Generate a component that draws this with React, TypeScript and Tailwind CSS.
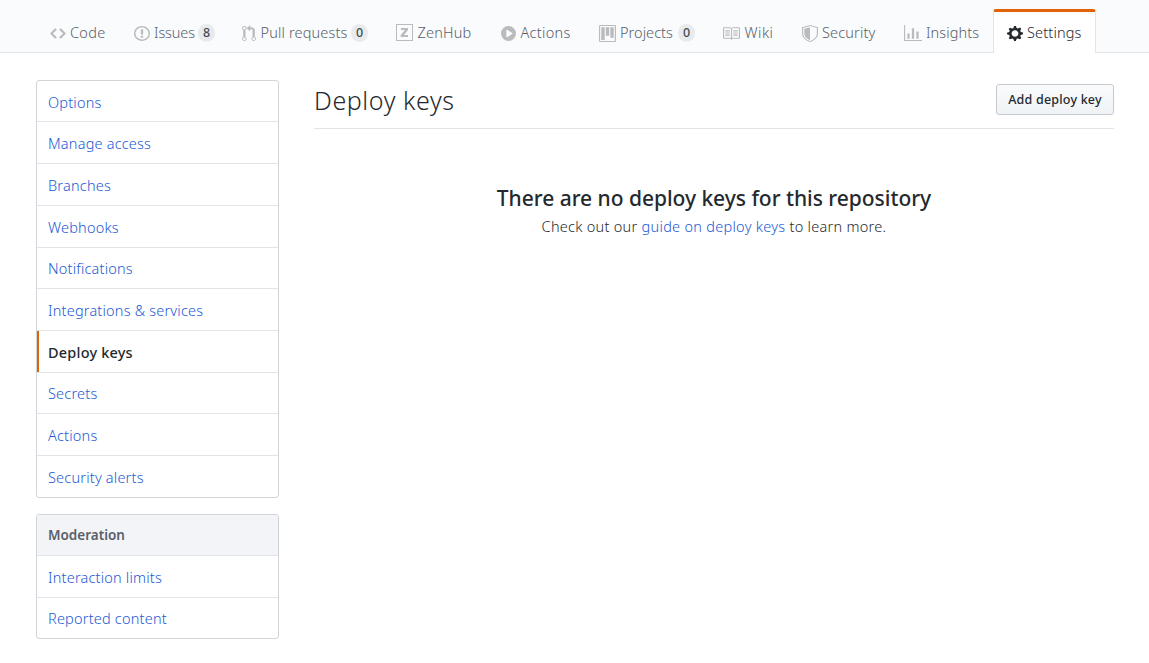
import type { ReactNode } from "react";

type Glyph = { viewBox: string; size: string; d: string };

const glyphs: Record<string, Glyph> = {
  code: {
    viewBox: "0 0 14 16",
    size: "w-4 h-[17px]",
    d: "M9.5 3L8 4.5 11.5 8 8 11.5 9.5 13 14 8 9.5 3zm-5 0L0 8l4.5 5L6 11.5 2.5 8 6 4.5 4.5 3z",
  },
  issue: {
    viewBox: "0 0 14 16",
    size: "w-4 h-[17px]",
    d: "M7 2.3c3.14 0 5.7 2.56 5.7 5.7s-2.56 5.7-5.7 5.7A5.71 5.71 0 011.3 8c0-3.14 2.56-5.7 5.7-5.7zM7 1C3.14 1 0 4.14 0 8s3.14 7 7 7 7-3.14 7-7-3.14-7-7-7zm1 3H6v5h2V4zm0 6H6v2h2v-2z",
  },
  pull: {
    viewBox: "0 0 12 16",
    size: "w-3.5 h-[17px]",
    d: "M11 11.28V5c-.03-.78-.34-1.47-.94-2.06C9.46 2.35 8.78 2.03 8 2H7V0L4 3l3 3V4h1c.27.02.48.11.69.31.21.2.3.42.31.69v6.28A1.993 1.993 0 0010 15a1.993 1.993 0 001-3.72zm-1 2.92c-.66 0-1.2-.55-1.2-1.2 0-.65.55-1.2 1.2-1.2.65 0 1.2.55 1.2 1.2 0 .65-.55 1.2-1.2 1.2zM4 3c0-1.11-.89-2-2-2a1.993 1.993 0 00-1 3.72v6.56A1.993 1.993 0 002 15a1.993 1.993 0 001-3.72V4.72c.59-.34 1-.98 1-1.72zm-.8 10c0 .66-.55 1.2-1.2 1.2-.65 0-1.2-.55-1.2-1.2 0-.65.55-1.2 1.2-1.2.65 0 1.2.55 1.2 1.2zM2 4.2C1.34 4.2.8 3.65.8 3c0-.65.55-1.2 1.2-1.2.65 0 1.2.55 1.2 1.2 0 .65-.55 1.2-1.2 1.2z",
  },
  zen: {
    viewBox: "0 0 17 17",
    size: "w-[17px] h-[17px] -mt-px",
    d: "M0 0h17v17H0zM1 1v15h15V1zM5 4h7v2L7.9 11H12v2H4.7v-2L8.900 6H5z",
  },
  play: {
    viewBox: "0 0 14 16",
    size: "w-[15px] h-[17px]",
    d: "M14 8A7 7 0 110 8a7 7 0 0114 0zm-8.223 3.482l4.599-3.066a.5.5 0 000-.832L5.777 4.518A.5.5 0 005 4.934v6.132a.5.5 0 00.777.416z",
  },
  project: {
    viewBox: "0 0 15 16",
    size: "w-[17px] h-[17px]",
    d: "M10 12h3V2h-3v10zm-4-2h3V2H6v8zm-4 4h3V2H2v12zm-1 1h13V1H1v14zM14 0H1a1 1 0 00-1 1v14a1 1 0 001 1h13a1 1 0 001-1V1a1 1 0 00-1-1z",
  },
  book: {
    viewBox: "1 0 15 16",
    size: "w-[17px] h-[17px]",
    d: "M3 5h4v1H3V5zm0 3h4V7H3v1zm0 2h4V9H3v1zm11-5h-4v1h4V5zm0 2h-4v1h4V7zm0 2h-4v1h4V9zm2-6v9c0 .55-.45 1-1 1H9.500l-1 1-1-1H2c-.55 0-1-.45-1-1V3c0-.55.45-1 1-1h5.500l1 1 1-1H15c.55 0 1 .45 1 1zm-8 .5L7.500 3H2v9h6V3.500zm7-.5H9.500l-.5.5V12h6V3z",
  },
  shield: {
    viewBox: "0 0 14 16",
    size: "w-4 h-[17px]",
    d: "M0 2l7-2 7 2v6.02C14 12.69 8.69 16 7 16c-1.69 0-7-3.31-7-7.98V2zm1 .75L7 1l6 1.750v5.268C13 12.104 8.449 15 7 15c-1.449 0-6-2.896-6-6.982V2.750zm1 .75L7 2v12c-1.207 0-5-2.482-5-5.985V3.500z",
  },
  graph: {
    viewBox: "0 0 16 16",
    size: "w-[18px] h-[17px]",
    d: "M16 14v1H0V0h1v14h15zM5 13H3V8h2v5zm4 0H7V3h2v10zm4 0h-2V6h2v7z",
  },
  gear: {
    viewBox: "0 0 14 16",
    size: "w-4 h-[17px]",
    d: "M14 8.770v-1.600l-1.940-.64-.45-1.090.88-1.840-1.130-1.130-1.810.91-1.090-.45-.69-1.920h-1.600l-.63 1.940-1.110.45-1.840-.88-1.130 1.130.91 1.810-.45 1.090L0 7.230v1.590l1.940.64.45 1.090-.88 1.840 1.130 1.130 1.810-.91 1.090.45.69 1.920h1.590l.63-1.940 1.110-.45 1.840.88 1.130-1.130-.92-1.810.47-1.090L14 8.750v.02zM7 11c-1.660 0-3-1.340-3-3s1.340-3 3-3 3 1.340 3 3-1.340 3-3 3z",
  },
};

function Icon({ name, color }: { name: string; color: string }) {
  const g = glyphs[name];
  return (
    <svg viewBox={g.viewBox} preserveAspectRatio="none" className={`shrink-0 ${g.size} ${color}`}>
      <path d={g.d} fill="currentColor" fillRule="evenodd" />
    </svg>
  );
}

type Tab = { icon: string; label: string; box: string; text: string; count?: number };

const tabs: Tab[] = [
  { icon: "code", label: "Code", box: "w-[84px] gap-1", text: "tracking-[0.3px]" },
  { icon: "issue", label: "Issues", box: "w-[108px] gap-1", text: "w-10 tracking-[-0.1px]", count: 8 },
  { icon: "pull", label: "Pull requests", box: "w-[154px] gap-[4.5px]", text: "w-[86px] tracking-[0.15px]", count: 0 },
  { icon: "zen", label: "ZenHub", box: "w-[105px] gap-[4.5px]", text: "tracking-[0.2px]" },
  { icon: "play", label: "Actions", box: "w-[98px] gap-[4.5px]", text: "tracking-[0.3px]" },
  { icon: "project", label: "Projects", box: "w-[124px] gap-1", text: "w-[54px] tracking-[0.05px]", count: 0 },
  { icon: "book", label: "Wiki", box: "w-[79px] gap-[4.5px]", text: "tracking-[0.5px]" },
  { icon: "shield", label: "Security", box: "w-[102px] gap-1", text: "tracking-[0.15px]" },
  { icon: "graph", label: "Insights", box: "w-[89px] gap-1", text: "tracking-[0.1px]" },
];

function TabBar() {
  return (
    <nav className="flex h-[53px] border-b border-[#e1e4e8] bg-[#fafbfd] pl-[50px] pt-[9px]">
      {tabs.map((t) => (
        <a key={t.label} className={`flex h-12 shrink-0 items-center text-[#586069] ${t.box}`}>
          <Icon name={t.icon} color="text-[#babbbc]" />
          <span className={`-mt-0.5 whitespace-nowrap ${t.text}`}>{t.label}</span>
          {t.count !== undefined && (
            <span className="flex h-[18px] w-[17px] items-center justify-center rounded-full bg-[#e9eaec] text-[12.5px] font-medium text-[#444d56]">
              {t.count}
            </span>
          )}
        </a>
      ))}
      <a className="flex h-11 w-[103px] shrink-0 items-center gap-1 rounded-t-[3px] border-x border-t-[3px] border-x-[#e1e4e8] border-t-[#e36209] bg-white pl-[13px] pt-px text-[#24292e]">
        <Icon name="gear" color="text-[#24292e]" />
        <span className="-mt-0.5 whitespace-nowrap tracking-[0.15px]">Settings</span>
      </a>
    </nav>
  );
}

const menu = [
  { label: "Options", row: "h-[41px] pt-0.5" },
  { label: "Manage access", row: "h-[42px]" },
  { label: "Branches", row: "h-[42px]" },
  { label: "Webhooks", row: "h-[42px]" },
  { label: "Notifications", row: "h-[41px]" },
  { label: "Integrations & services", row: "h-[42px]" },
  { label: "Deploy keys", row: "h-[42px]" },
  { label: "Secrets", row: "h-[41px]" },
  { label: "Actions", row: "h-[42px]" },
  { label: "Security alerts", row: "h-[41px]" },
];

const moderation = [
  { label: "Interaction limits", row: "h-[42px]" },
  { label: "Reported content", row: "h-[40px]" },
];

function Panel({ children }: { children: ReactNode }) {
  return (
    <div className="overflow-hidden rounded-[3px] border border-[#d1d5da] bg-white">{children}</div>
  );
}

function MenuRow({ label, row }: { label: string; row: string }) {
  const active = label === "Deploy keys";
  return (
    <a
      className={`flex items-center border-b border-[#e1e4e8] tracking-[0.2px] last:border-b-0 ${row} ${
        active ? "font-medium text-[#24292e]" : "text-[#2259d3]"
      }`}
    >
      <span
        className={`w-0.5 self-stretch ${active ? "bg-[#d9640f]" : ""}`}
      />
      <span className="pl-[9px]">{label}</span>
    </a>
  );
}

export default function App() {
  return (
    <div className="h-[663px] overflow-hidden bg-white font-['Noto_Sans','Open_Sans',sans-serif] text-[14.5px] font-[350] leading-5 text-[#24292e]">
      <TabBar />
      <div className="flex pl-9 pt-[27px]">
        <aside className="flex w-[243px] shrink-0 flex-col gap-4">
          <Panel>
            {menu.map((m) => (
              <MenuRow key={m.label} {...m} />
            ))}
          </Panel>
          <Panel>
            <h3 className="flex h-[41px] items-center border-b border-[#e1e4e8] bg-[#f3f4f8] pl-[11px] text-[13.5px] font-semibold text-[#586069]">
              Moderation
            </h3>
            {moderation.map((m) => (
              <MenuRow key={m.label} {...m} />
            ))}
          </Panel>
        </aside>
        <main className="ml-[35px] w-[800px]">
          <header className="flex h-[49px] items-start justify-between border-b border-[#e1e4e8]">
            <h1 className="pt-0.5 text-[25px] leading-9 tracking-[0.6px]">Deploy keys</h1>
            <button className="mt-1 h-[31px] w-[118px] rounded-[3px] border border-[#c5c9cd] bg-linear-to-b from-[#fafbfc] to-[#eff3f6] text-[12.5px] font-medium tracking-[0.2px]">
              Add deploy key
            </button>
          </header>
          <div className="pt-[54px] text-center">
            <h2 className="text-[21px] font-medium leading-[31px] tracking-[-0.03px]">
              There are no deploy keys for this repository
            </h2>
            <p className="-mt-px leading-[26px] tracking-[0.28px]">
              Check out our <a className="text-[#2259d3]">guide on deploy keys</a> to learn more.
            </p>
          </div>
        </main>
      </div>
    </div>
  );
}
